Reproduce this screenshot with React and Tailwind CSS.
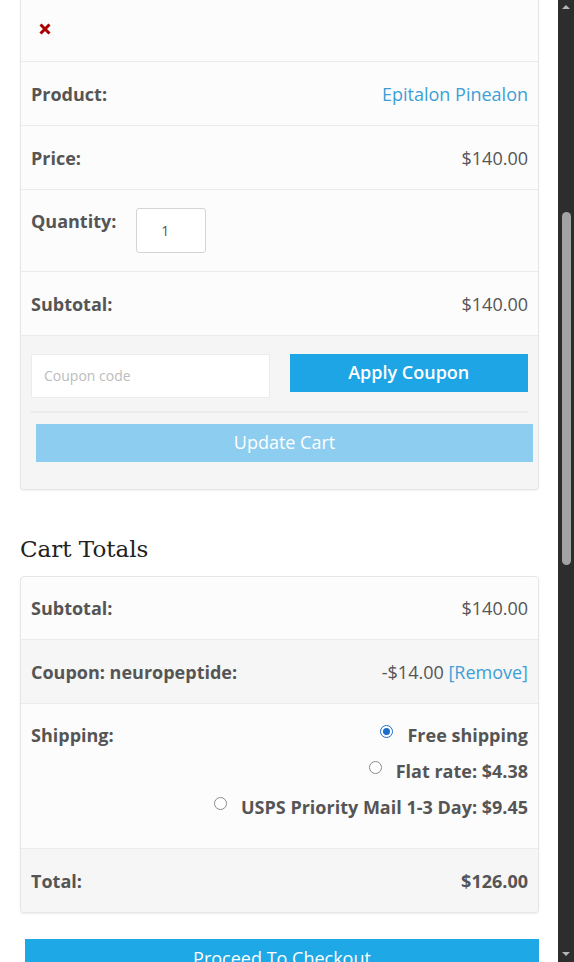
import React from 'react';

const font = { fontFamily: '"Open Sans", "Liberation Sans", sans-serif' };

// Une ligne label / valeur du tableau panier
const Row = ({ label, children, gray, short }) => (
    <div className={`flex items-center justify-between ${short ? 'h-[63px]' : 'h-[64px]'} px-[10px] border-b border-[#ebebeb] ${gray ? 'bg-[#f6f6f6]' : ''}`}>
        <span className="font-bold text-[#555]">{label}</span>
        <span className="text-[#555]">{children}</span>
    </div>
);

const Radio = ({ checked }) => (
    <span className={`inline-block w-[13px] h-[13px] rounded-full border shrink-0 -translate-y-[4px] ${checked ? 'border-[#1a6ec9] bg-white p-[2px]' : 'border-[#8a8a8a] bg-white'}`}>
        {checked && <span className="block w-full h-full rounded-full bg-[#1a6ec9]" />}
    </span>
);

const ShipOption = ({ checked, children }) => (
    <div className="flex items-center justify-end gap-[14px] h-[36px]">
        <Radio checked={checked} />
        <span className="font-bold text-[#555]">{children}</span>
    </div>
);

export default function App() {
    return (
        <div className="flex h-[962px] overflow-hidden bg-white text-[18px] leading-[26px]" style={font}>
            <div className="flex-1 pl-[20px] pr-[19px]">

                {/* Carte produit (haut coupé par le défilement) */}
                <div className="border border-t-0 border-[#e6e6e6] rounded-b-[4px] shadow-[0_1px_2px_rgba(0,0,0,0.06)] bg-[#fcfcfc]">
                    <div className="h-[62px] flex items-center px-[17px] border-b border-[#ebebeb]">
                        <svg width="14" height="14" viewBox="0 0 14 14" className="-translate-y-[2px]">
                            <path d="M2.5 2.5 L11.5 11.5 M11.5 2.5 L2.5 11.5" stroke="#aa0000" strokeWidth="3" strokeLinecap="butt" />
                        </svg>
                    </div>
                    <Row label="Product:">
                        <span className="text-[#3d9fd6]">Epitalon Pinealon</span>
                    </Row>
                    <Row label="Price:">$140.00</Row>
                    <div className="flex items-start gap-[20px] h-[82px] px-[10px] pt-[18px] border-b border-[#ebebeb]">
                        <span className="font-bold text-[#555]">Quantity:</span>
                        <div className="w-[70px] h-[45px] border border-[#d4d4d4] rounded-[3px] bg-white flex items-center pl-[24px] text-[14px] text-[#555]">1</div>
                    </div>
                    <Row label="Subtotal:">$140.00</Row>

                    <div className="bg-[#f5f5f5] px-[10px] pt-[18px] pb-[27px] rounded-b-[4px]">
                        <div className="grid grid-cols-2 gap-[20px] items-start">
                            <div className="h-[44px] bg-white border border-[#ececec] flex items-center pl-[12px] text-[14px] text-[#bcbcbc]">Coupon code</div>
                            <button className="h-[38px] bg-[#1ea5e6] text-white text-[18px] font-semibold leading-none pb-[2px]">Apply Coupon</button>
                        </div>
                        <div className="mt-[13px] border-t-2 border-[#ebebeb]" />
                        <button className="mt-[11px] ml-[5px] -mr-[5px] w-full h-[38px] bg-[#8dcef0] text-white text-[18px] leading-none pb-[2px]">Update Cart</button>
                    </div>
                </div>

                <h2 className="mt-[42px] mb-[10px] text-[23px] leading-[34px] text-[#222]" style={{ fontFamily: '"DejaVu Serif", "Liberation Serif", serif' }}>Cart Totals</h2>

                {/* Totaux */}
                <div className="border border-[#e6e6e6] rounded-[4px] shadow-[0_1px_2px_rgba(0,0,0,0.08)] bg-[#fcfcfc] overflow-hidden">
                    <Row label="Subtotal:" short>$140.00</Row>
                    <Row label="Coupon: neuropeptide:" gray>
                        -$14.00 <span className="text-[#3d9fd6]">[Remove]</span>
                    </Row>
                    <div className="flex items-start justify-between h-[145px] px-[10px] pt-[13px] border-b border-[#ebebeb]">
                        <span className="font-bold text-[#555] leading-[36px]">Shipping:</span>
                        <div>
                            <ShipOption checked>Free shipping</ShipOption>
                            <ShipOption>Flat rate: $4.38</ShipOption>
                            <ShipOption>USPS Priority Mail 1-3 Day: $9.45</ShipOption>
                        </div>
                    </div>
                    <div className="flex items-center justify-between h-[63px] px-[10px] bg-[#f6f6f6]">
                        <span className="font-bold text-[#555]">Total:</span>
                        <span className="font-bold text-[#555]">$126.00</span>
                    </div>
                </div>

                <button className="mt-[26px] ml-[5px] w-[514px] h-[50px] bg-[#1ea8e6] text-white text-[18px] leading-none pb-[22px] flex items-end justify-center">Proceed To Checkout</button>
            </div>

            {/* Barre de défilement */}
            <div className="w-[16px] bg-[#2d2d2d] flex flex-col items-center">
                <svg width="10" height="10" viewBox="0 0 10 10" className="mt-[2px]"><path d="M1 7 L5 3 L9 7 Z" fill="#b5b5b5" /></svg>
                <div className="mt-[200px] w-[9px] h-[353px] rounded-full bg-[#a3a3a3]" />
                <div className="flex-1" />
                <svg width="10" height="10" viewBox="0 0 10 10" className="mb-[3px]"><path d="M1 3 L5 7 L9 3 Z" fill="#b5b5b5" /></svg>
            </div>
        </div>
    );
}
